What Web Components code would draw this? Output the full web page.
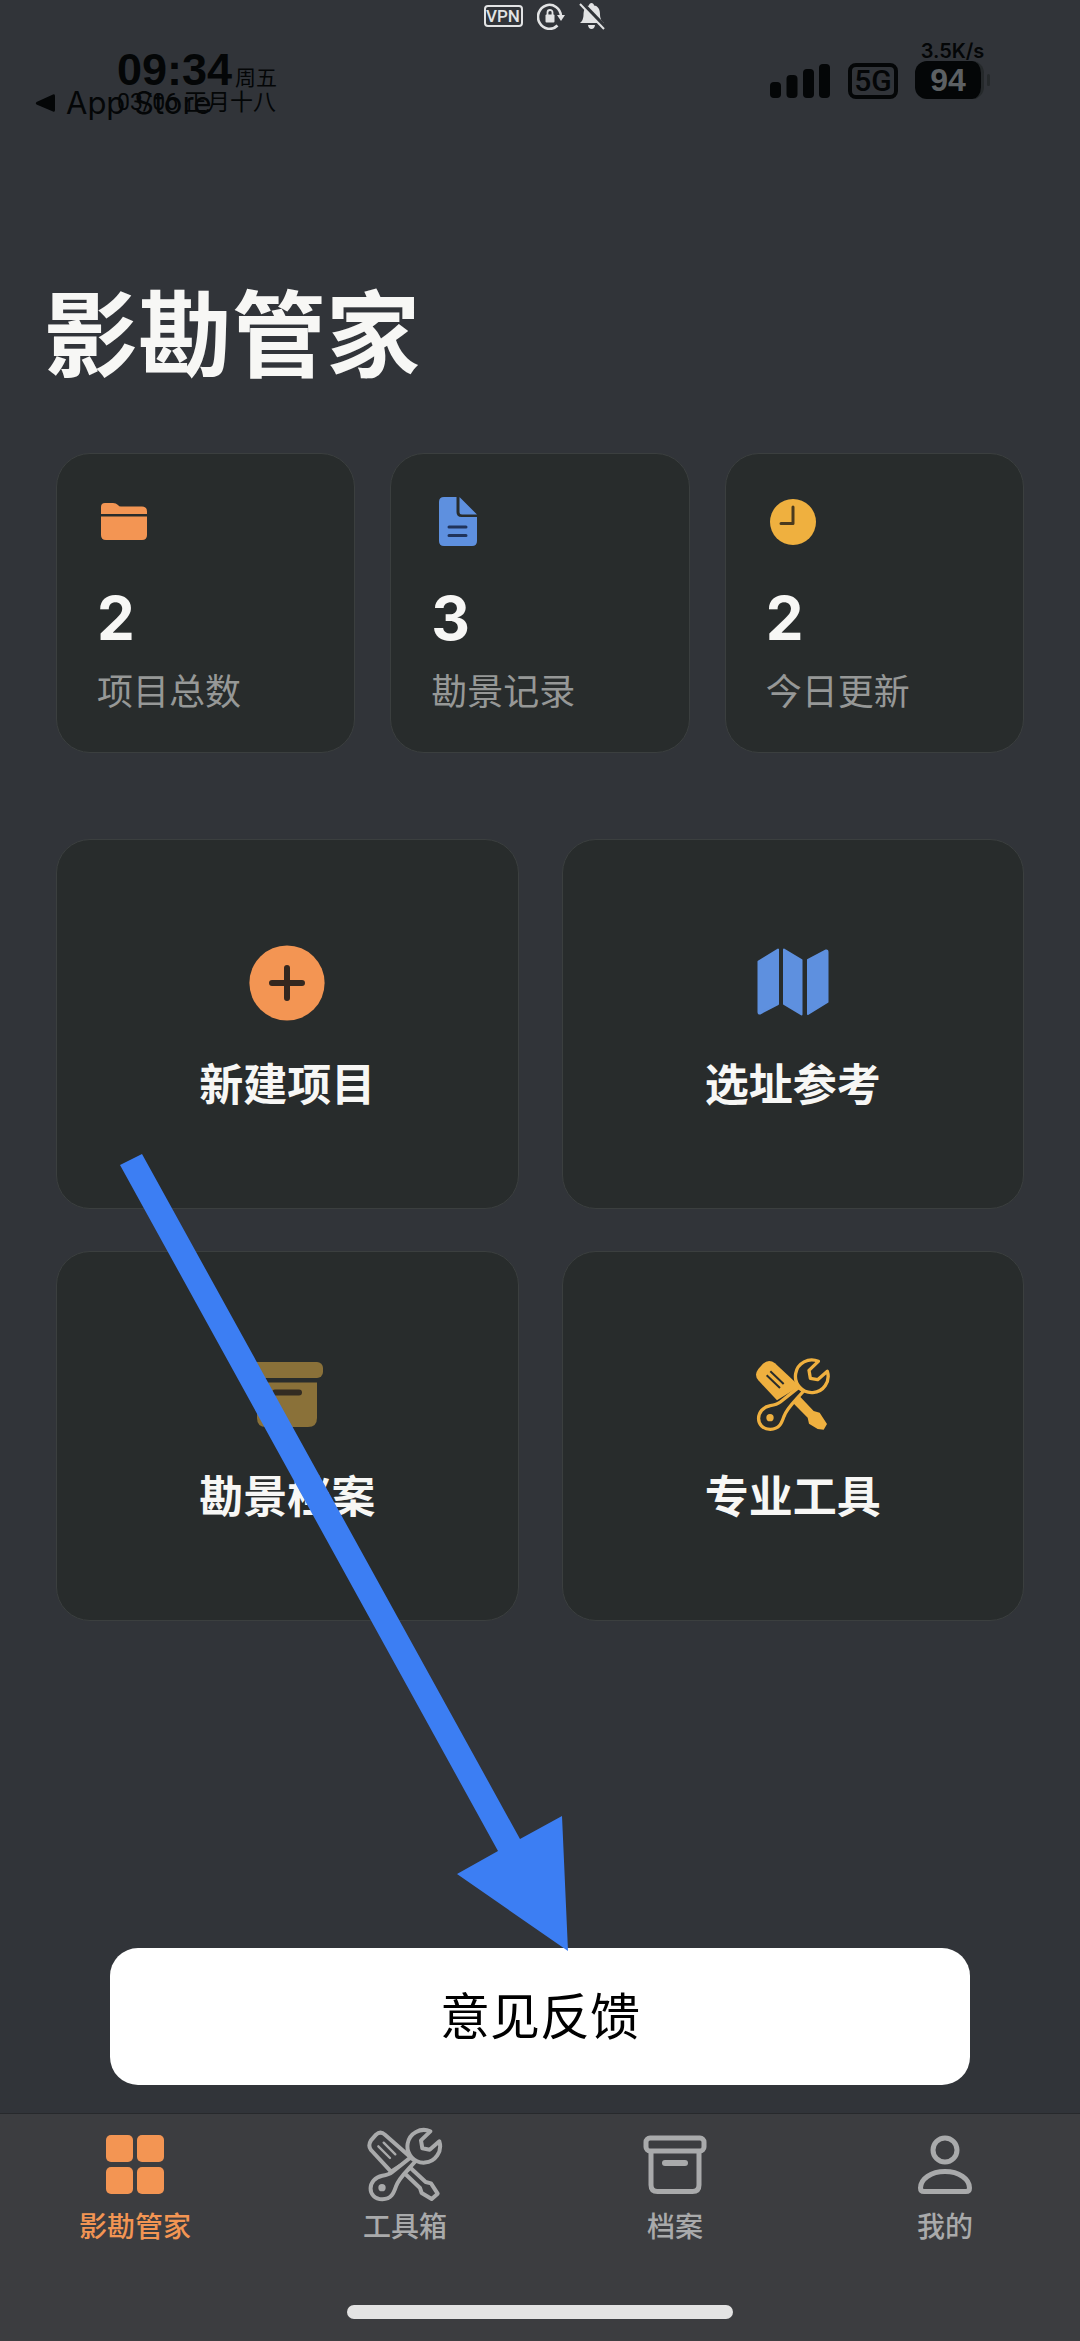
<!DOCTYPE html>
<html lang="zh-CN">
<head>
<meta charset="utf-8">
<meta name="viewport" content="width=device-width, initial-scale=1">
<title>影勘管家</title>
<style>
  html, body { margin: 0; }
  body {
    --bg: #313439;
    --card: #282c2c;
    --line: #3b3f3f;
    --bar: #3c3d40;
    --text: #f7f7f5;
    --muted: #969897;
    --orange: #f39553;
    --blue: #5e90df;
    --yellow: #efb03f;
    --brown: #8a7139;
    background: var(--bg);
    color: var(--text);
    font-family: Inter, "Noto Sans CJK SC", sans-serif;
  }
</style>
</head>
<body>
<survey-app>
  <status-bar slot="status"></status-bar>
  <span slot="title">影勘管家</span>
  <stat-card slot="stats" icon="folder" value="2">项目总数</stat-card>
  <stat-card slot="stats" icon="doc" value="3">勘景记录</stat-card>
  <stat-card slot="stats" icon="clock" value="2">今日更新</stat-card>
  <action-card slot="actions" icon="plus">新建项目</action-card>
  <action-card slot="actions" icon="map">选址参考</action-card>
  <action-card slot="actions" icon="archive">勘景档案</action-card>
  <action-card slot="actions" icon="tools">专业工具</action-card>
  <feedback-button slot="feedback">意见反馈</feedback-button>
  <tab-bar slot="tabs">
    <tab-item icon="grid" active>影勘管家</tab-item>
    <tab-item icon="tools-line">工具箱</tab-item>
    <tab-item icon="archive-line">档案</tab-item>
    <tab-item icon="person">我的</tab-item>
  </tab-bar>
  <pointer-arrow slot="overlay"></pointer-arrow>
</survey-app>

<script>
const WRENCH = (cut, stroke) => `
  <g fill="${cut}" stroke="currentColor" stroke-width="${stroke}" stroke-linejoin="round">
    <path d="M326 176L272 219Q262 227 242 230C196 238 194 300 242 301C270 300 276 282 283 262C292 236 312 220 342 186Z"/>
    <path d="M386 97L358 124L362 148L384 152L413 127A49 49 0 1 1 386 97Z"/>
  </g>
  <circle cx="241" cy="266" r="11" fill="currentColor"/>`;

const ICONS = {
  folder: ['var(--orange)', '0 0 54 54', 54, 54, `
    <path fill="currentColor" d="M4 19v-7q0-4 4-4h8q3 0 5 2 1 1.500 3 1.500h21q5 0 5 5V19zM4 21.500h46V40q0 5-5 5H9q-5 0-5-5z"/>`],
  doc: ['var(--blue)', '0 0 54 54', 54, 54, `
    <path fill="currentColor" d="M13 2h12.500v15q0 5 5 5H46V46q0 5-5 5H13q-5 0-5-5V7q0-5 5-5zM28.500 2L46 19.500H31q-2.500 0-2.500-2.500z"/>
    <path d="M18 32h17M18 40.500h17" stroke="#20335a" stroke-width="3" stroke-linecap="round"/>`],
  clock: ['var(--yellow)', '0 0 54 54', 54, 54, `
    <circle cx="27" cy="27" r="23" fill="currentColor"/>
    <path d="M27 12v16.500H15" fill="none" stroke="#4a3a1e" stroke-width="3" stroke-linecap="round" stroke-linejoin="round"/>`],
  plus: ['var(--orange)', '0 0 76 76', 76, 76, `
    <circle cx="38" cy="38" r="37.600" fill="currentColor"/>
    <path d="M38 23v30M23 38h30" stroke="#33271f" stroke-width="6" stroke-linecap="round"/>`],
  map: ['var(--blue)', '0 0 76 76', 76, 76, `
    <g fill="currentColor" stroke="currentColor" stroke-width="2" stroke-linejoin="round">
      <path d="M3.500 16.500L23 4.500V59L5 68.500Q3.500 69 3.500 67z"/>
      <path d="M29 4.500L46.500 15V69.500L29 59z"/>
      <path d="M53 15L71 5.500Q72.500 5 72.500 7V57L53 69z"/>
    </g>`],
  archive: ['var(--brown)', '0 0 76 76', 76, 76, `
    <rect x="2" y="5" width="72" height="16" rx="6" fill="currentColor"/>
    <path fill="currentColor" d="M8 25.500h60V61q0 9-9 9H17q-9 0-9-9z"/>
    <path d="M26 35.500h24" stroke="#332c22" stroke-width="6" stroke-linecap="round"/>`],
  tools: ['var(--yellow)', '196 84 228 228', 76, 76, `
    <path fill="currentColor" d="M220 104Q238 88 256 103L330 172L262 214L206 154Q192 138 206 120Z"/>
    <path d="M242 127L282 165M231 139L271 177" stroke="#282c2c" stroke-width="6"/>
    <path fill="currentColor" d="M330 202L372 246L390 251L412 285L402 302L384 300L358 284L354 266L308 220Z"/>
    ${WRENCH('#282c2c', 10)}`],
  'tools-line': ['currentColor', '196 84 228 228', 76, 76, `
    <g fill="none" stroke="currentColor" stroke-width="12" stroke-linejoin="round">
      <path d="M223 107Q236 95 250 107L330 178L268 218L208 153Q198 140 208 124Z"/>
      <path d="M246 131L281 166M230 142L265 177" stroke-width="7" stroke-linecap="round"/>
      <path d="M326 206L372 249L388 253L408 284L390 300L360 282L355 267L308 222Z"/>
    </g>
    ${WRENCH('#3c3d40', 12)}`],
  grid: ['currentColor', '0 0 76 76', 76, 76, `
    <g fill="currentColor"><rect x="9" y="8" width="27" height="27" rx="5"/><rect x="40" y="8" width="27" height="27" rx="5"/>
    <rect x="9" y="40" width="27" height="27" rx="5"/><rect x="40" y="40" width="27" height="27" rx="5"/></g>`],
  'archive-line': ['currentColor', '0 0 76 76', 76, 76, `
    <g fill="none" stroke="currentColor" stroke-width="5">
      <rect x="9" y="11" width="58" height="13" rx="4"/>
      <path d="M14 24V58q0 6.500 6.500 6.500h35q6.500 0 6.500-6.500V24"/>
      <path d="M28 36h20" stroke-width="6" stroke-linecap="round"/>
    </g>`],
  person: ['currentColor', '0 0 76 76', 76, 76, `
    <g fill="none" stroke="currentColor" stroke-width="5" stroke-linejoin="round">
      <circle cx="38" cy="23" r="12"/>
      <path d="M13.500 61C13.500 52 24 44.500 38 44.500S62.500 52 62.500 61Q62.500 64.500 59 64.500H17Q13.500 64.500 13.500 61z"/>
    </g>`]
};

class BaseElement extends HTMLElement {
  connectedCallback() {
    if (this.shadowRoot) return;
    this.attachShadow({ mode: 'open' }).innerHTML =
      '<style>*{box-sizing:border-box}button{font:inherit;color:inherit;margin:0;padding:0;border:0;cursor:pointer}</style>' + this.render();
  }
}

customElements.define('app-icon', class extends BaseElement {
  render() {
    const [color, box, w, h, body] = ICONS[this.getAttribute('name')];
    return `<style>:host{display:block;flex:none;color:inherit}svg{display:block;color:${color}}</style>
      <svg width="${w}" height="${h}" viewBox="${box}" aria-hidden="true">${body}</svg>`;
  }
});

customElements.define('status-bar', class extends BaseElement {
  render() {
    return `<style>
      :host{display:block;color:#040607}
      .top{display:flex;justify-content:center;align-items:center;gap:14px;height:32px;padding-left:8px;color:#e2e3e4}
      .vpn{display:flex;align-items:center;justify-content:center;width:39px;height:22px;border:2px solid;border-radius:4px;font:500 17px/18px Roboto,sans-serif}
      svg{display:block}
      .row{display:flex;justify-content:space-between;align-items:flex-start;padding:10px 90px 0 35px}
      .left{display:grid;grid-template-columns:auto 1fr;padding-top:4px}
      .clock{display:flex;align-items:baseline;gap:3px;grid-area:1/1;height:45px;padding-left:82px;font-size:21px;line-height:48px}
      .time{font:700 45px/48px "Liberation Sans",sans-serif}
      .date,.back{grid-area:2/1}
      .date{height:24px;padding-left:82px;font:400 23px/24px Roboto,"Noto Sans CJK SC",sans-serif;white-space:nowrap}
      .back{display:flex;align-items:center;gap:11px;height:24px;font-size:31px;line-height:24px;white-space:nowrap}
      .right{display:flex;align-items:flex-end;gap:17px}
      .net{display:flex;align-items:center;justify-content:center;width:50px;height:36px;border:4px solid;border-radius:8px;font:500 30px/28px Roboto,sans-serif}
      .power{display:flex;flex-direction:column;align-items:center;font:600 20px/19px Inter,sans-serif}
      .cell{display:flex;align-items:center;gap:3px}
      .level{width:69px;height:38px;border-radius:12px;background:#040607;border-right:3px solid #25292b;color:#5c6063;font:700 32px/38px "Liberation Sans",sans-serif;text-align:center}
      .nub{width:3px;height:12px;border-radius:2px;background:#25292b}
    </style>
    <div class="top">
      <span class="vpn">VPN</span>
      <svg width="28" height="28" viewBox="0 0 28 28" fill="none" stroke="currentColor" stroke-width="2.600">
        <path d="M24 14A11.500 12 0 1 0 20.500 23.500"/><path d="M20 13h8l-4 6z" fill="currentColor" stroke="none"/>
        <rect x="8.500" y="12.500" width="9" height="8" rx="1" fill="currentColor" stroke="none"/><path d="M10.500 13v-2.500a2.500 2.500 0 0 1 5 0V13" stroke-width="1.800"/>
      </svg>
      <svg width="26" height="28" viewBox="0 0 26 28">
        <path fill="currentColor" d="M1 21q3.500-3 3.500-8C4.500 7 7 4 10 3.500 10 0 15 0 15 3.500 19 4 21 7 21 13q0 5 4 8zM9 23h7q-.5 4-3.500 4T9 23z"/>
        <path d="M2 0L27 26" stroke="#313439" stroke-width="4"/><path d="M1 2L25 27" stroke="currentColor" stroke-width="2"/>
      </svg>
    </div>
    <div class="row">
      <div class="left">
        <div class="clock"><span class="time">09:34</span><span>周五</span></div>
        <div class="date">03/06 正月十八</div>
        <div class="back"><svg width="20" height="20" viewBox="0 0 20 20"><path fill="currentColor" d="M18 1.500Q20 .5 20 3v14q0 2.500-2 1.500L1.500 11.500Q0 10 1.500 9z"/></svg><span>App Store</span></div>
      </div>
      <div class="right">
        <svg width="61" height="36" viewBox="0 0 61 36" fill="currentColor">
          <rect x="0" y="19" width="11" height="16" rx="4"/><rect x="16.500" y="12" width="11" height="23" rx="4"/><rect x="33" y="6" width="11" height="29" rx="4"/><rect x="49" y="1" width="11" height="34" rx="4"/>
        </svg>
        <span class="net">5G</span>
        <div class="power"><span>3.5K/s</span><div class="cell"><div class="level">94</div><div class="nub"></div></div></div>
      </div>
    </div>`;
  }
});

customElements.define('stat-card', class extends BaseElement {
  render() {
    return `<style>
      :host{display:flex;flex-direction:column;box-sizing:border-box;background:var(--card);border:1px solid var(--line);border-radius:34px;padding:41px 40px 40px}
      .value{margin:39px 0 24px;font-size:60px;line-height:60px;font-weight:700}
      .label{font-size:36px;line-height:40px;color:var(--muted);font-weight:400}
    </style>
    <app-icon name="${this.getAttribute('icon')}"></app-icon>
    <div class="value">${this.getAttribute('value')}</div>
    <div class="label"><slot></slot></div>`;
  }
});

customElements.define('action-card', class extends BaseElement {
  render() {
    return `<style>
      :host{display:block}
      button{display:flex;flex-direction:column;align-items:center;gap:36px;width:100%;padding:105px 0 95px;background:var(--card);border:1px solid var(--line);border-radius:34px;font-size:44px;line-height:56px;font-weight:600;color:var(--text)}
    </style>
    <button type="button"><app-icon name="${this.getAttribute('icon')}"></app-icon><span><slot></slot></span></button>`;
  }
});

customElements.define('feedback-button', class extends BaseElement {
  render() {
    return `<style>
      :host{display:block}
      button{display:block;width:100%;height:137px;border-radius:28px;background:#fff;color:#000;font-size:50px;line-height:60px}
    </style><button type="button"><slot></slot></button>`;
  }
});

customElements.define('tab-bar', class extends BaseElement {
  render() {
    return `<style>
      :host{display:block;background:var(--bar);border-top:1px solid #27292c;padding:13px 0 22px}
      nav{display:grid;grid-template-columns:repeat(4,1fr)}
      .home{width:386px;height:14px;border-radius:7px;background:#e3e3e3;margin:62px auto 0}
    </style><nav><slot></slot></nav><div class="home"></div>`;
  }
});

customElements.define('tab-item', class extends BaseElement {
  render() {
    return `<style>
      :host{display:block;color:#a9aaab}
      :host([active]){color:var(--orange)}
      a{display:flex;flex-direction:column;align-items:center;gap:8px;color:inherit;text-decoration:none;font-size:28px;line-height:32px;font-weight:500}
    </style><a href="#"><app-icon name="${this.getAttribute('icon')}"></app-icon><span><slot></slot></span></a>`;
  }
});

customElements.define('pointer-arrow', class extends BaseElement {
  render() {
    return `<style>:host{display:block;position:absolute;left:120px;top:1154px;pointer-events:none}svg{display:block}</style>
    <svg width="448" height="798" viewBox="0 0 448 798" aria-hidden="true"><path fill="#3c7ef3" d="M0 11L22 0L400 685L442 662L448 797L337 720L378 697z"/></svg>`;
  }
});

customElements.define('survey-app', class extends BaseElement {
  render() {
    return `<style>
      :host{display:flex;flex-direction:column;position:relative;min-height:100vh}
      header{min-height:280px}
      h1{margin:0 44px;font-size:94px;line-height:112px;font-weight:700}
      main{flex:1;display:flex;flex-direction:column}
      .stats{display:grid;grid-template-columns:repeat(3,1fr);gap:35px;margin:61px 56px 0}
      .actions{display:grid;grid-template-columns:repeat(2,1fr);gap:42px 43px;margin:86px 56px 0}
      .feedback{margin:auto 110px 28px}
    </style>
    <header><slot name="status"></slot></header>
    <main>
      <h1><slot name="title"></slot></h1>
      <section class="stats"><slot name="stats"></slot></section>
      <section class="actions"><slot name="actions"></slot></section>
      <div class="feedback"><slot name="feedback"></slot></div>
    </main>
    <slot name="tabs"></slot>
    <slot name="overlay"></slot>`;
  }
});
</script>
</body>
</html>
